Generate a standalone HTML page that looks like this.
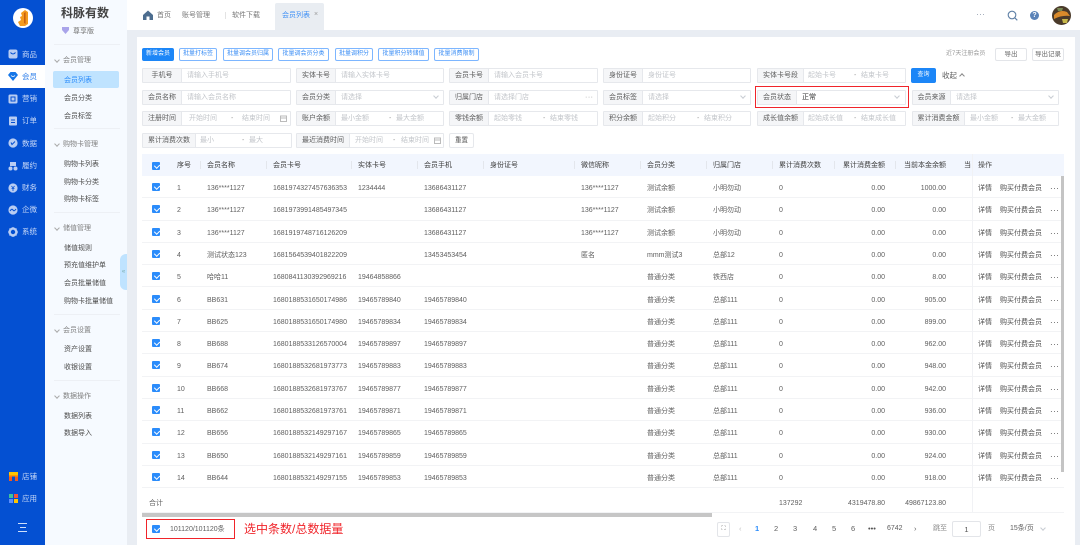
<!DOCTYPE html>
<html lang="zh"><head><meta charset="utf-8"><title>会员列表</title>
<style>
*{box-sizing:border-box;margin:0;padding:0}
html,body{width:1080px;height:545px;overflow:hidden;background:#e9edf3}
body{position:relative;font:7px/1 "Liberation Sans","Noto Sans CJK SC",sans-serif;color:#666}
#w{position:absolute;left:0;top:0;width:1080px;height:545px;filter:blur(.25px)}
#w span,#w div,#w svg,#w i,#w b{position:absolute;white-space:nowrap}
.nav{left:22px;color:#c7d8f7;font-size:7.5px;line-height:10px;margin-top:1px}
.sub{left:64px;color:#4d4d4d;line-height:10px;margin-top:2px}
.grp{left:63px;color:#808080;line-height:10px;margin-top:1px}
.grp:before{content:"";position:absolute;left:-8px;top:2px;width:3px;height:3px;border:solid #aaa;border-width:0 1px 1px 0;transform:rotate(45deg)}
.hr{left:54px;width:66px;height:1px;background:#edf0f5}
.btn{top:48px;height:13px;border:1px solid #7db6ff;border-radius:2px;color:#3d8ff5;background:#fff;text-align:center;line-height:11px;font-size:6px}
.f{height:15px;border:1px solid #e6e8ec;background:#fff;border-radius:1px}
.f .l{left:0;top:0;height:13px;background:#f5f6f8;border-right:1px solid #e6e8ec;color:#5c5c5c;text-align:center;line-height:14px;font-size:7px}
.f .p{top:0;line-height:14px;color:#c2c5ca;font-size:7px}
.f .d{top:0;line-height:14px;color:#999}
.ch{width:4px;height:4px;border:solid #c8ccd2;border-width:0 1px 1px 0;transform:rotate(45deg);top:3px}
.cb{width:8px;height:8px;background:#2b8cfb;border-radius:1px}
.cb:after{content:"";position:absolute;left:2.6px;top:1px;width:2.5px;height:4.4px;border:solid #fff;border-width:0 1px 1px 0;transform:rotate(45deg)}
.r{left:142px;width:922px;height:22.3px;border-bottom:1px solid #f2f3f5;background:#fff}
.r span{top:2px;line-height:22px;color:#5e5e5e}
.r .cb{left:10px;top:7px}
.s{left:35px}.n{left:65px}.k{left:131px}.e{left:216px}.t{left:282px}.w{left:439px}.y{left:505px}.m{left:571px}.z{left:637px}
.x{right:179px;text-align:right}.b{right:118px;text-align:right}
.q{left:836px;color:#4d4d4d!important}.u{left:858px;color:#4d4d4d!important}.v{left:908px;letter-spacing:.4px;color:#444!important;font-size:8px}
.h span{color:#3d3d3d;top:1px;line-height:22px}
.sep{width:1px;height:8px;top:7px;background:#e3e6ec}
.pg{top:523px;line-height:10px;color:#5e5e5e;font-size:7.5px;margin-top:1px}
</style></head><body><div id="w">

<!-- top bar -->
<div style="left:45px;top:0;width:1035px;height:30px;background:#fff"></div>
<div style="left:275px;top:3px;width:49px;height:27px;background:#e9edf2;border-radius:2px 2px 0 0"></div>
<svg style="left:143px;top:10px" width="10" height="10" viewBox="0 0 10 10"><path d="M5 .5 0 5v5h3.500V6.500h3V10H10V5z" fill="#4d6d8f"/></svg>
<span style="left:157px;top:11px;color:#777;line-height:9px">首页</span>
<span style="left:182px;top:10.500px;color:#777;line-height:9px">账号管理</span>
<div style="left:225px;top:12px;width:1px;height:7px;background:#e3e3e3"></div>
<span style="left:232px;top:10.500px;color:#777;line-height:9px">软件下载</span>
<span style="left:282px;top:10.500px;color:#3d8ff5;line-height:9px">会员列表</span>
<span style="left:314px;top:10px;color:#999;line-height:9px">×</span>
<span style="left:976px;top:10px;color:#9aa5b5;font-size:9px;line-height:9px">···</span>
<svg style="left:1007px;top:10px" width="11" height="11" viewBox="0 0 11 11"><circle cx="5" cy="5" r="3.800" fill="none" stroke="#5d7fa5" stroke-width="1.100"/><path d="M7.800 7.800 10.300 10.300" stroke="#5d7fa5" stroke-width="1.100"/></svg>
<div style="left:1030px;top:11px;width:9px;height:9px;border-radius:50%;background:#5b83b8;color:#fff;font-size:7px;line-height:9px;text-align:center;font-weight:bold">?</div>
<svg style="left:1052px;top:6px" width="19" height="19" viewBox="0 0 19 19"><circle cx="9.500" cy="9.500" r="9.500" fill="#4a3a2a"/><path d="M2 9Q8 3 15 6L18 10Q10 9 2 13Z" fill="#d98a2b"/><path d="M10 13h6l-1 4h-4z" fill="#c7b84a"/><path d="M5 2h6l-1 3H6z" fill="#7b8a55"/></svg>

<!-- left rail -->
<div style="left:0;top:0;width:45px;height:545px;background:#0450d2"></div>
<div style="left:0;top:65px;width:45px;height:23px;background:#fff"></div>
<div style="left:13px;top:8px;width:20px;height:20px;border-radius:50%;background:#fff"></div>
<svg style="left:17px;top:10px" width="12" height="16" viewBox="0 0 12 16"><path d="M8 0 11 2V14L8 16H3L1 12 4 10 3 7 5 6 4 3Z" fill="#f39a1e"/><path d="M7 3 8.600 2V14L7 13Z" fill="#c9610f"/></svg>
<svg style="left:8px;top:49px" width="10" height="10" viewBox="0 0 10 10"><rect width="9" height="9" x=".5" y=".5" rx="2" fill="#b9cdf3"/><path d="M2.500 3.500Q5 6.500 7.500 3.500" stroke="#0450d2" fill="none"/></svg>
<svg style="left:8px;top:72px" width="10" height="9" viewBox="0 0 10 9"><path d="M2.500 0h5L10 3 5 9 0 3z" fill="#1677e8"/><path d="M3 3.500Q5 5.500 7 3.500" stroke="#fff" fill="none" stroke-width=".8"/></svg>
<svg style="left:8px;top:94px" width="10" height="10" viewBox="0 0 10 10"><rect width="9" height="9" x=".5" y=".5" rx="1.500" fill="#b9cdf3"/><rect x="3" y="3" width="4" height="4" fill="none" stroke="#0450d2"/></svg>
<svg style="left:8px;top:116px" width="10" height="10" viewBox="0 0 10 10"><rect x="1" y=".5" width="8" height="9" rx="1" fill="#b9cdf3"/><path d="M3 4h4M3 6.500h4" stroke="#0450d2"/></svg>
<svg style="left:8px;top:138px" width="10" height="10" viewBox="0 0 10 10"><circle cx="5" cy="5" r="4.600" fill="#b9cdf3"/><path d="M3 4.500 4 6.500 5.500 5 7 3.500" stroke="#0450d2" fill="none"/></svg>
<svg style="left:8px;top:161px" width="10" height="10" viewBox="0 0 10 10"><circle cx="2.500" cy="7.500" r="2" fill="#b9cdf3"/><circle cx="7.500" cy="7.500" r="2" fill="#b9cdf3"/><rect x="2" y="1" width="6" height="4" fill="#b9cdf3"/></svg>
<svg style="left:8px;top:183px" width="10" height="10" viewBox="0 0 10 10"><circle cx="5" cy="5" r="4.600" fill="#b9cdf3"/><path d="M3.500 3 5 5l1.500-2M3.500 5.500h3M5 5v3" stroke="#0450d2" stroke-width=".8" fill="none"/></svg>
<svg style="left:8px;top:205px" width="10" height="10" viewBox="0 0 10 10"><circle cx="5" cy="5" r="4.600" fill="#b9cdf3"/><path d="M2 6Q4 3 5 5T8 4" stroke="#0450d2" fill="none"/></svg>
<svg style="left:8px;top:227px" width="10" height="10" viewBox="0 0 10 10"><circle cx="5" cy="5" r="3.400" fill="none" stroke="#b9cdf3" stroke-width="2.400"/><path d="M5 0v1.500M5 8.500V10M0 5h1.500M8.500 5H10M1.500 1.500l1 1M7.500 7.500l1 1M8.500 1.500l-1 1M2.500 7.500l-1 1" stroke="#b9cdf3"/></svg>
<span class="nav" style="top:49px">商品</span>
<span class="nav" style="top:71px;color:#2b7de9">会员</span>
<span class="nav" style="top:93px">营销</span>
<span class="nav" style="top:115px">订单</span>
<span class="nav" style="top:138px">数据</span>
<span class="nav" style="top:160px">履约</span>
<span class="nav" style="top:182px">财务</span>
<span class="nav" style="top:204px">企微</span>
<span class="nav" style="top:226px">系统</span>
<svg style="left:9px;top:472px" width="9" height="9" viewBox="0 0 9 9"><rect width="9" height="3" fill="#ffc400"/><rect y="3" width="9" height="1.500" fill="#ff9800"/><path d="M0 4.500h3V9H0zM6 4.500h3V9H6z" fill="#f05a22"/></svg>
<svg style="left:9px;top:494px" width="9" height="9" viewBox="0 0 9 9"><rect width="4" height="4" fill="#3ec39a"/><rect x="5" width="4" height="4" fill="#f0533a"/><rect y="5" width="4" height="4" fill="#5b8cff"/><rect x="5" y="5" width="4" height="4" fill="#ffc400"/></svg>
<span class="nav" style="left:22px;top:471px">店铺</span>
<span class="nav" style="left:22px;top:493px">应用</span>
<svg style="left:18px;top:523px" width="10" height="9" viewBox="0 0 10 9"><path d="M0 .5h9M2 4.500h6M0 8.500h9" stroke="#cfe0fb"/></svg>

<!-- sub nav -->
<div style="left:45px;top:0;width:82px;height:545px;background:#f6faff"></div>
<span style="left:61px;top:7px;font-size:12px;line-height:13px;color:#444;font-weight:bold">科脉有数</span>
<svg style="left:62px;top:27px" width="7" height="7" viewBox="0 0 7 7"><path d="M0 0h7v3L3.500 7 0 3z" fill="#a9a4ea"/></svg>
<span style="left:73px;top:27px;color:#777;line-height:9px">尊享版</span>
<div class="hr" style="top:44px"></div>
<span class="grp" style="top:55px">会员管理</span>
<div style="left:53px;top:71px;width:66px;height:17px;background:#bfe3ff;border-radius:2px"></div>
<span class="sub" style="top:74px;color:#2b8cfb">会员列表</span>
<span class="sub" style="top:92px">会员分类</span>
<span class="sub" style="top:110px">会员标签</span>
<div class="hr" style="top:128px"></div>
<span class="grp" style="top:139px">购物卡管理</span>
<span class="sub" style="top:158px">购物卡列表</span>
<span class="sub" style="top:176px">购物卡分类</span>
<span class="sub" style="top:193px">购物卡标签</span>
<div class="hr" style="top:212px"></div>
<span class="grp" style="top:223px">储值管理</span>
<span class="sub" style="top:242px">储值规则</span>
<span class="sub" style="top:259px">预充值维护单</span>
<span class="sub" style="top:277px">会员批量储值</span>
<span class="sub" style="top:295px">购物卡批量储值</span>
<div class="hr" style="top:314px"></div>
<span class="grp" style="top:325px">会员设置</span>
<span class="sub" style="top:343px">资产设置</span>
<span class="sub" style="top:361px">收银设置</span>
<div class="hr" style="top:380px"></div>
<span class="grp" style="top:391px">数据操作</span>
<span class="sub" style="top:410px">数据列表</span>
<span class="sub" style="top:427px">数据导入</span>
<div style="left:120px;top:254px;width:7px;height:36px;background:#bfe3ff;border-radius:6px 0 0 6px;color:#7aa;font-size:6px;line-height:36px;text-align:center">«</div>

<!-- card -->
<div style="left:137px;top:37px;width:938px;height:508px;background:#fff"></div>
<div class="btn" style="left:142px;width:32px;background:#1c86f7;border-color:#1c86f7;color:#fff">新增会员</div>
<div class="btn" style="left:179px;width:38px">批量打标签</div>
<div class="btn" style="left:223px;width:50px">批量调会员归属</div>
<div class="btn" style="left:278px;width:51px">批量调会员分类</div>
<div class="btn" style="left:335px;width:38px">批量调积分</div>
<div class="btn" style="left:378px;width:51px">批量积分转储值</div>
<div class="btn" style="left:434px;width:45px">批量消费限制</div>
<span style="left:946px;top:50px;color:#999;font-size:6px;line-height:9px">近7天注册会员</span>
<div class="btn" style="left:995px;width:32px;border-color:#e3e5e9;color:#666;font-size:6.500px">导出</div>
<div class="btn" style="left:1032px;width:32px;border-color:#e3e5e9;color:#666;font-size:6.500px">导出记录</div>

<!-- row 1 -->
<div class="f" style="left:142px;top:68px;width:149px"><span class="l" style="width:39px">手机号</span><span class="p" style="left:44px">请输入手机号</span></div>
<div class="f" style="left:296px;top:68px;width:148px"><span class="l" style="width:39px">实体卡号</span><span class="p" style="left:44px">请输入实体卡号</span></div>
<div class="f" style="left:449px;top:68px;width:149px"><span class="l" style="width:39px">会员卡号</span><span class="p" style="left:44px">请输入会员卡号</span></div>
<div class="f" style="left:603px;top:68px;width:148px"><span class="l" style="width:39px">身份证号</span><span class="p" style="left:44px">身份证号</span></div>
<div class="f" style="left:757px;top:68px;width:149px"><span class="l" style="width:46px">实体卡号段</span><span class="p" style="left:50px">起始卡号</span><span class="d" style="left:96px">-</span><span class="p" style="left:103px">结束卡号</span></div>
<div style="left:911px;top:68px;width:25px;height:15px;background:#1c86f7;border-radius:2px;color:#fff;text-align:center;line-height:15px;font-size:6px">查询</div>
<span style="left:942px;top:71px;color:#5e5e5e;line-height:9px;font-size:7.500px">收起</span>
<div style="left:960px;top:74px;width:4px;height:4px;border:solid #888;border-width:1px 0 0 1px;transform:rotate(45deg)"></div>
<!-- row 2 -->
<div class="f" style="left:142px;top:90px;width:149px"><span class="l" style="width:39px">会员名称</span><span class="p" style="left:44px">请输入会员名称</span></div>
<div class="f" style="left:296px;top:90px;width:148px"><span class="l" style="width:39px">会员分类</span><span class="p" style="left:44px">请选择</span><i class="ch" style="left:137px"></i></div>
<div class="f" style="left:449px;top:90px;width:149px"><span class="l" style="width:39px">归属门店</span><span class="p" style="left:44px">请选择门店</span><span class="d" style="left:135px;letter-spacing:.5px">···</span></div>
<div class="f" style="left:603px;top:90px;width:148px"><span class="l" style="width:39px">会员标签</span><span class="p" style="left:44px">请选择</span><i class="ch" style="left:137px"></i></div>
<div class="f" style="left:757px;top:90px;width:149px"><span class="l" style="width:39px">会员状态</span><span class="d" style="left:44px;color:#333">正常</span><i class="ch" style="left:137px"></i></div>
<div style="left:755px;top:86px;width:154px;height:22px;border:1.500px solid #f0242a"></div>
<div class="f" style="left:912px;top:90px;width:147px"><span class="l" style="width:38px">会员来源</span><span class="p" style="left:43px">请选择</span><i class="ch" style="left:136px"></i></div>
<!-- row 3 -->
<div class="f" style="left:142px;top:111px;width:149px"><span class="l" style="width:39px">注册时间</span><span class="p" style="left:46px">开始时间</span><span class="d" style="left:88px">-</span><span class="p" style="left:99px">结束时间</span><svg style="left:137px;top:3px" width="7" height="7" viewBox="0 0 7 7"><rect x=".5" y="1" width="6" height="5.500" fill="none" stroke="#bbb"/><path d="M.5 3h6" stroke="#bbb"/></svg></div>
<div class="f" style="left:296px;top:111px;width:148px"><span class="l" style="width:39px">账户余额</span><span class="p" style="left:44px">最小金额</span><span class="d" style="left:92px">-</span><span class="p" style="left:99px">最大金额</span></div>
<div class="f" style="left:449px;top:111px;width:149px"><span class="l" style="width:39px">零钱余额</span><span class="p" style="left:44px">起始零钱</span><span class="d" style="left:93px">-</span><span class="p" style="left:100px">结束零钱</span></div>
<div class="f" style="left:603px;top:111px;width:148px"><span class="l" style="width:39px">积分余额</span><span class="p" style="left:44px">起始积分</span><span class="d" style="left:93px">-</span><span class="p" style="left:100px">结束积分</span></div>
<div class="f" style="left:757px;top:111px;width:149px"><span class="l" style="width:46px">成长值余额</span><span class="p" style="left:50px">起始成长值</span><span class="d" style="left:96px">-</span><span class="p" style="left:103px">结束成长值</span></div>
<div class="f" style="left:912px;top:111px;width:147px"><span class="l" style="width:52px">累计消费金额</span><span class="p" style="left:57px">最小金额</span><span class="d" style="left:98px">-</span><span class="p" style="left:105px">最大金额</span></div>
<!-- row 4 -->
<div class="f" style="left:142px;top:133px;width:150px"><span class="l" style="width:53px">累计消费次数</span><span class="p" style="left:57px">最小</span><span class="d" style="left:99px">-</span><span class="p" style="left:106px">最大</span></div>
<div class="f" style="left:296px;top:133px;width:148px"><span class="l" style="width:53px">最近消费时间</span><span class="p" style="left:58px">开始时间</span><span class="d" style="left:96px">-</span><span class="p" style="left:104px">结束时间</span><svg style="left:137px;top:3px" width="7" height="7" viewBox="0 0 7 7"><rect x=".5" y="1" width="6" height="5.500" fill="none" stroke="#bbb"/><path d="M.5 3h6" stroke="#bbb"/></svg></div>
<div class="f" style="left:449px;top:133px;width:25px;text-align:center;line-height:13px;color:#555;font-size:6.500px;border-radius:2px">重置</div>

<!-- table -->
<div class="r h" style="top:154px;height:22px;background:#f2f6fe;border:0">
<i class="cb" style="left:10px;top:8px"></i><span class="s">序号</span><span class="n">会员名称</span><span class="k">会员卡号</span><span class="e">实体卡号</span><span class="t">会员手机</span><span style="left:348px">身份证号</span><span class="w">微信昵称</span><span class="y">会员分类</span><span class="m">归属门店</span><span class="z">累计消费次数</span><span class="x">累计消费金额</span><span class="b">当前本金余额</span><span style="left:822px">当</span><span class="q">操作</span>
<i class="sep" style="left:58px"></i><i class="sep" style="left:124px"></i><i class="sep" style="left:209px"></i><i class="sep" style="left:275px"></i><i class="sep" style="left:341px"></i><i class="sep" style="left:432px"></i><i class="sep" style="left:498px"></i><i class="sep" style="left:564px"></i><i class="sep" style="left:630px"></i><i class="sep" style="left:692px"></i><i class="sep" style="left:753px"></i><i class="sep" style="left:830px"></i></div>

<div class="r" style="top:176px"><i class="cb"></i><span class="s">1</span><span class="n">136****1127</span><span class="k">1681974327457636353</span><span class="e">1234444</span><span class="t">13686431127</span><span class="w">136****1127</span><span class="y">测试余额</span><span class="m">小明勿动</span><span class="z">0</span><span class="x">0.00</span><span class="b">1000.00</span><span class="q">详情</span><span class="u">购买付费会员</span><span class="v">···</span></div>
<div class="r" style="top:198.300px"><i class="cb"></i><span class="s">2</span><span class="n">136****1127</span><span class="k">1681973991485497345</span><span class="t">13686431127</span><span class="w">136****1127</span><span class="y">测试余额</span><span class="m">小明勿动</span><span class="z">0</span><span class="x">0.00</span><span class="b">0.00</span><span class="q">详情</span><span class="u">购买付费会员</span><span class="v">···</span></div>
<div class="r" style="top:220.600px"><i class="cb"></i><span class="s">3</span><span class="n">136****1127</span><span class="k">1681919748716126209</span><span class="t">13686431127</span><span class="w">136****1127</span><span class="y">测试余额</span><span class="m">小明勿动</span><span class="z">0</span><span class="x">0.00</span><span class="b">0.00</span><span class="q">详情</span><span class="u">购买付费会员</span><span class="v">···</span></div>
<div class="r" style="top:242.900px"><i class="cb"></i><span class="s">4</span><span class="n">测试状态123</span><span class="k">1681564539401822209</span><span class="t">13453453454</span><span class="w">匿名</span><span class="y">mmm测试3</span><span class="m">总部12</span><span class="z">0</span><span class="x">0.00</span><span class="b">0.00</span><span class="q">详情</span><span class="u">购买付费会员</span><span class="v">···</span></div>
<div class="r" style="top:265.200px"><i class="cb"></i><span class="s">5</span><span class="n">哈哈11</span><span class="k">1680841130392969216</span><span class="e">19464858866</span><span class="y">普通分类</span><span class="m">铁西店</span><span class="z">0</span><span class="x">0.00</span><span class="b">8.00</span><span class="q">详情</span><span class="u">购买付费会员</span><span class="v">···</span></div>
<div class="r" style="top:287.500px"><i class="cb"></i><span class="s">6</span><span class="n">BB631</span><span class="k">1680188531650174986</span><span class="e">19465789840</span><span class="t">19465789840</span><span class="y">普通分类</span><span class="m">总部111</span><span class="z">0</span><span class="x">0.00</span><span class="b">905.00</span><span class="q">详情</span><span class="u">购买付费会员</span><span class="v">···</span></div>
<div class="r" style="top:309.800px"><i class="cb"></i><span class="s">7</span><span class="n">BB625</span><span class="k">1680188531650174980</span><span class="e">19465789834</span><span class="t">19465789834</span><span class="y">普通分类</span><span class="m">总部111</span><span class="z">0</span><span class="x">0.00</span><span class="b">899.00</span><span class="q">详情</span><span class="u">购买付费会员</span><span class="v">···</span></div>
<div class="r" style="top:332.100px"><i class="cb"></i><span class="s">8</span><span class="n">BB688</span><span class="k">1680188533126570004</span><span class="e">19465789897</span><span class="t">19465789897</span><span class="y">普通分类</span><span class="m">总部111</span><span class="z">0</span><span class="x">0.00</span><span class="b">962.00</span><span class="q">详情</span><span class="u">购买付费会员</span><span class="v">···</span></div>
<div class="r" style="top:354.400px"><i class="cb"></i><span class="s">9</span><span class="n">BB674</span><span class="k">1680188532681973773</span><span class="e">19465789883</span><span class="t">19465789883</span><span class="y">普通分类</span><span class="m">总部111</span><span class="z">0</span><span class="x">0.00</span><span class="b">948.00</span><span class="q">详情</span><span class="u">购买付费会员</span><span class="v">···</span></div>
<div class="r" style="top:376.700px"><i class="cb"></i><span class="s">10</span><span class="n">BB668</span><span class="k">1680188532681973767</span><span class="e">19465789877</span><span class="t">19465789877</span><span class="y">普通分类</span><span class="m">总部111</span><span class="z">0</span><span class="x">0.00</span><span class="b">942.00</span><span class="q">详情</span><span class="u">购买付费会员</span><span class="v">···</span></div>
<div class="r" style="top:399px"><i class="cb"></i><span class="s">11</span><span class="n">BB662</span><span class="k">1680188532681973761</span><span class="e">19465789871</span><span class="t">19465789871</span><span class="y">普通分类</span><span class="m">总部111</span><span class="z">0</span><span class="x">0.00</span><span class="b">936.00</span><span class="q">详情</span><span class="u">购买付费会员</span><span class="v">···</span></div>
<div class="r" style="top:421.300px"><i class="cb"></i><span class="s">12</span><span class="n">BB656</span><span class="k">1680188532149297167</span><span class="e">19465789865</span><span class="t">19465789865</span><span class="y">普通分类</span><span class="m">总部111</span><span class="z">0</span><span class="x">0.00</span><span class="b">930.00</span><span class="q">详情</span><span class="u">购买付费会员</span><span class="v">···</span></div>
<div class="r" style="top:443.600px"><i class="cb"></i><span class="s">13</span><span class="n">BB650</span><span class="k">1680188532149297161</span><span class="e">19465789859</span><span class="t">19465789859</span><span class="y">普通分类</span><span class="m">总部111</span><span class="z">0</span><span class="x">0.00</span><span class="b">924.00</span><span class="q">详情</span><span class="u">购买付费会员</span><span class="v">···</span></div>
<div class="r" style="top:465.900px"><i class="cb"></i><span class="s">14</span><span class="n">BB644</span><span class="k">1680188532149297155</span><span class="e">19465789853</span><span class="t">19465789853</span><span class="y">普通分类</span><span class="m">总部111</span><span class="z">0</span><span class="x">0.00</span><span class="b">918.00</span><span class="q">详情</span><span class="u">购买付费会员</span><span class="v">···</span></div>
<div class="r" style="top:488.500px;height:24px;border-bottom:1px solid #f2f3f5"><span style="left:7px;line-height:25px">合计</span><span class="z" style="line-height:25px">137292</span><span class="x" style="line-height:25px">4319478.80</span><span class="b" style="line-height:25px">49867123.80</span></div>

<div style="left:972px;top:154px;width:1px;height:358px;background:#f1f2f5"></div>
<div style="left:1061px;top:176px;width:3px;height:296px;background:#c4c4c4"></div>
<div style="left:142px;top:513px;width:570px;height:4px;background:#c6c6c6"></div>

<!-- footer -->
<div style="left:146px;top:519px;width:89px;height:20px;border:1.500px solid #f0242a"></div>
<i class="cb" style="left:152px;top:525px"></i>
<span style="left:170px;top:525px;color:#5e5e5e;line-height:9px">101120/101120条</span>
<span style="left:244px;top:523px;color:#f0242a;font-size:12px;line-height:13px">选中条数/总数据量</span>

<div style="left:717px;top:522px;width:13px;height:15px;border:1px solid #e3e5e9;border-radius:2px;color:#777;text-align:center;font-size:6px;line-height:12px">⛶</div>
<span class="pg" style="left:739px;color:#c0c0c0">‹</span>
<span class="pg" style="left:755px;color:#2b8cfb;font-weight:bold">1</span>
<span class="pg" style="left:774px">2</span>
<span class="pg" style="left:793px">3</span>
<span class="pg" style="left:813px">4</span>
<span class="pg" style="left:832px">5</span>
<span class="pg" style="left:851px">6</span>
<span class="pg" style="left:868px;color:#555">•••</span>
<span class="pg" style="left:887px;font-size:7px">6742</span>
<span class="pg" style="left:914px">›</span>
<span class="pg" style="left:933px;font-size:7px;color:#888">跳至</span>
<div style="left:952px;top:521px;width:29px;height:16px;border:1px solid #e3e5e9;border-radius:2px;text-align:center;line-height:15px;color:#555;font-size:7.500px">1</div>
<span class="pg" style="left:988px;font-size:7px;color:#888">页</span>
<span class="pg" style="left:1010px;font-size:7px">15条/页</span>
<i class="ch" style="left:1041px;top:526px"></i>
</div></body></html>
